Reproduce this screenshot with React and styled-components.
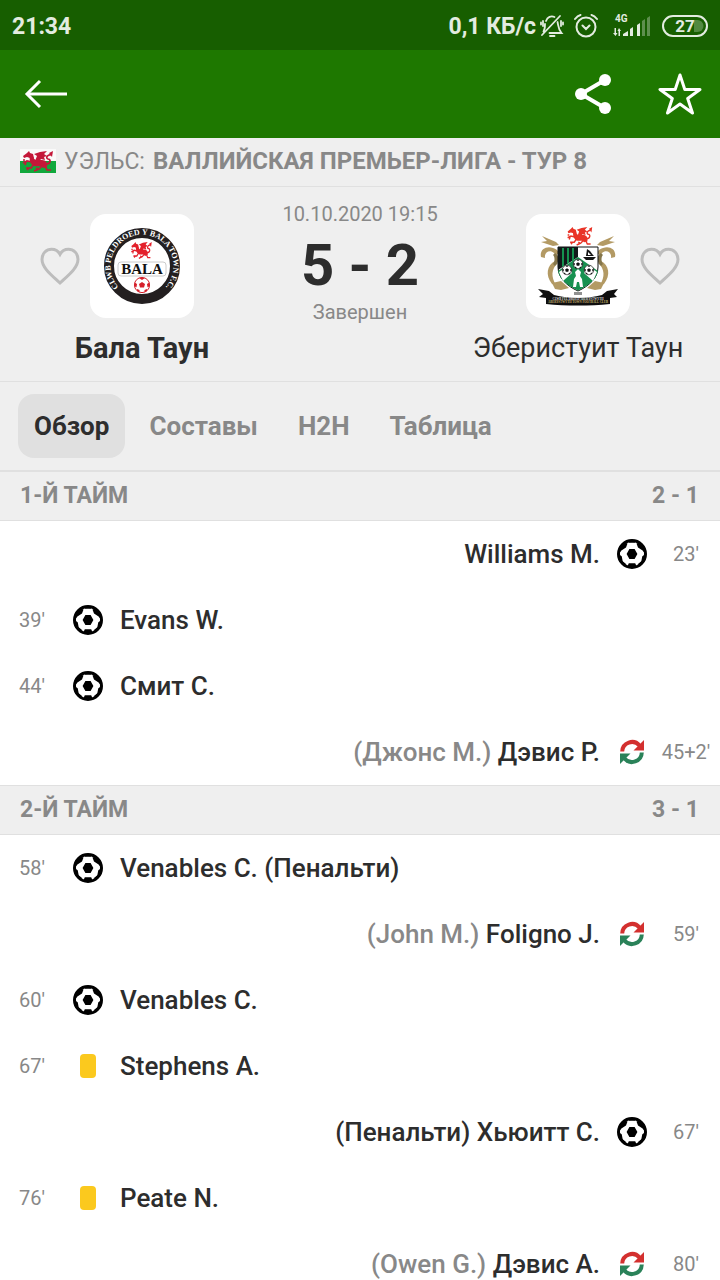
import React, { useState } from 'react';
import styled, { createGlobalStyle } from 'styled-components';

const color = {
  status: '#175e00',
  bar: '#1e7800',
  panel: '#efefef',
  line: '#e0e0e0',
  text: '#2d2d2d',
  muted: '#888888',
};

const GlobalStyle = createGlobalStyle`
  * { box-sizing: border-box; }
  body {
    margin: 0;
    background: #ffffff;
    color: ${color.text};
    font-family: Roboto, 'Noto Sans', sans-serif;
  }
  h1, h2, p, ul { margin: 0; padding: 0; }
  button { border: 0; padding: 0; background: none; font: inherit; color: inherit; cursor: pointer; }
`;

const Screen = styled.div`
  display: flex;
  flex-direction: column;
  height: 100vh;
  overflow: hidden;
`;

const StatusBar = styled.div`
  flex: none;
  display: flex;
  align-items: center;
  justify-content: space-between;
  height: 50px;
  padding: 2px 12px 0;
  background: ${color.status};
  color: #e3ece0;
  font-size: 23px;
  font-weight: 700;
`;

const StatusIcons = styled.div`
  display: flex;
  align-items: center;
`;

const StatusGlyph = styled.svg`
  display: block;
  margin-left: ${(p) => p.$gap}px;
`;

const SignalLabel = styled.text`
  font-size: 10px;
  font-weight: 700;
`;

const BatteryLabel = styled.text`
  font-size: 17px;
  font-weight: 700;
`;

const AppBar = styled.header`
  flex: none;
  display: flex;
  align-items: center;
  justify-content: space-between;
  height: 88px;
  padding: 0 16px 0 22px;
  background: ${color.bar};
  color: #ffffff;
`;

const AppBarActions = styled.div`
  display: flex;
  gap: 39px;
`;

const IconButton = styled.button`
  display: flex;
  align-items: center;
  justify-content: center;
  width: 48px;
  height: 48px;
`;

const League = styled.div`
  flex: none;
  display: flex;
  align-items: center;
  gap: 8px;
  height: 49px;
  padding: 0 20px 2px;
  background: ${color.panel};
  border-bottom: 1px solid ${color.line};
  color: ${color.muted};
  font-size: 23px;
  white-space: nowrap;
`;

const LeagueName = styled.strong`
  font-size: 24px;
  font-weight: 700;
`;

const Match = styled.section`
  flex: none;
  display: grid;
  grid-template-columns: 1fr 152px 1fr;
  height: 195px;
  background: ${color.panel};
  border-bottom: 1px solid ${color.line};
`;

const Team = styled.div`
  display: flex;
  flex-direction: column;
  align-items: center;
  gap: 12px;
  padding-top: 27px;
`;

const CrestRow = styled.div`
  display: grid;
  grid-template-columns: 40px 104px 40px;
  align-items: center;
  gap: 10px;
`;

const FavouriteButton = styled.button`
  display: flex;
  grid-row: 1;
  grid-column: ${(p) => (p.$side === 'left' ? 1 : 3)};
`;

const CrestCard = styled.div`
  grid-row: 1;
  grid-column: 2;
  height: 104px;
  border-radius: 16px;
  background: #ffffff;
`;

const CrestArt = styled.svg`
  display: block;
`;

const CrestText = styled.text`
  font-family: 'Liberation Serif', serif;
  font-size: ${(p) => p.$size}px;
  font-weight: 700;
`;

const TeamName = styled.h2`
  font-size: ${(p) => (p.$winner ? 29 : 27)}px;
  line-height: 36px;
  font-weight: ${(p) => (p.$winner ? 700 : 400)};
  white-space: nowrap;
`;

const Result = styled.div`
  display: flex;
  flex-direction: column;
  align-items: center;
  padding-top: 14px;
  white-space: nowrap;
`;

const ResultNote = styled.p`
  color: ${color.muted};
  font-size: 20px;
  line-height: 26px;
`;

const Score = styled.h1`
  padding-top: 4px;
  font-size: 58px;
  line-height: 68px;
  margin-bottom: 0;
  font-weight: 700;
`;

const Tabs = styled.nav`
  flex: none;
  display: flex;
  align-items: center;
  gap: 8px;
  height: 89px;
  padding: 0 18px;
  background: ${color.panel};
  border-bottom: 1px solid ${color.line};
`;

const Tab = styled.button`
  && {
    height: 64px;
    padding: 0 16px;
    border-radius: 16px;
    background: ${(p) => (p.$active ? '#e0e0e0' : 'transparent')};
    color: ${(p) => (p.$active ? color.text : color.muted)};
    font-size: 26px;
    font-weight: 700;
  }
`;

const Timeline = styled.main`
  flex: 1;
  min-height: 0;
  overflow-y: auto;
  scrollbar-width: none;
`;

const HalfHeader = styled.div`
  display: flex;
  align-items: center;
  justify-content: space-between;
  height: 50px;
  padding: 0 21px 2px 20px;
  background: ${color.panel};
  border-top: 1px solid ${color.line};
  border-bottom: 1px solid ${color.line};
  color: ${color.muted};
  font-size: 23px;
  font-weight: 700;
`;

const EventList = styled.ul`
  list-style: none;
`;

const EventRow = styled.li`
  display: flex;
  flex-direction: ${(p) => (p.$away ? 'row-reverse' : 'row')};
  align-items: center;
  height: 66px;
`;

const Minute = styled.span`
  display: flex;
  justify-content: center;
  width: ${(p) => (p.$away ? 68 : 64)}px;
  color: ${color.muted};
  font-size: 20px;
  white-space: nowrap;
`;

const EventIcon = styled.span`
  display: flex;
  justify-content: center;
  width: ${(p) => (p.$away ? 40 : 48)}px;
`;

const EventText = styled.span`
  padding: 0 ${(p) => (p.$away ? 12 : 8)}px;
  font-size: 26px;
  font-weight: 500;
  white-space: nowrap;
`;

const Replaced = styled.span`
  color: ${color.muted};
`;

const YellowCard = styled.span`
  width: 16px;
  height: 24px;
  border-radius: 4px;
  background: #fbc91e;
`;

function Dragon({ transform, tone }) {
  return (
    <g transform={transform} fill={tone}>
      <path d="M2 5 6 2 8 0 9 2 12 3 13 7 11 10 9 7 6 6 3 7Z" />
      <path d="M9 4C13 5 12 8 15 9L21 9C25 9 27 12 26 16L22 17C20 14 16 16 13 15 9 13 8 9 9 4Z" />
      <path d="M14 10 16 5 13 3 19 1 26 0 23 3 26 5 23 6 24 9 20 8 18 11Z" />
      <path d="M28 2 32 0 31 6Z" />
      <path
        d="M25 13C30 13 30 8 27 8 24 7 27 3 30 4M11 11 6 10 2 12M4 9 2 9M5 11 4 14M13 13 10 17 5 17M8 17 6 19M24 15 26 19 30 19M21 15 18 18 13 20M17 18 15 17"
        fill="none"
        stroke={tone}
        strokeWidth="1.7"
      />
    </g>
  );
}

function Ball() {
  return (
    <svg width="30" height="30" viewBox="0 0 30 30" aria-label="Гол">
      <circle cx="15" cy="15" r="13.5" fill="#fff" stroke="#000" strokeWidth="3" />
      <path
        d="M12.4 10H17.6L20.4 15 17.6 20H12.4L9.6 15ZM10.5 1.5H19.5L17.8 3.8H12.2ZM3 8 7.5 3.5 10.5 4.5 9 8.6 4.4 11.5 2.5 14H1.5ZM27 8 22.5 3.5 19.500 4.5 21 8.6 25.6 11.5 27.5 14H28.5ZM1.4 15 4.7 17.2 5.7 22.3 9 25 7 27 2.4 22ZM28.6 15 25.3 17.2 24.3 22.3 21 25 23 27 27.6 22ZM10 28.3 11.8 24.2H18.2L20 28.3Z"
        fill="#000"
      />
    </svg>
  );
}

function Substitution() {
  return (
    <svg width="26" height="26" viewBox="0 0 26 26" aria-label="Замена">
      <path d="M3.200 12.5A9.8 9.8 0 0 1 20.500 6.500" fill="none" stroke="#d3302f" strokeWidth="4" />
      <path d="M25 1V11.500H14.500Z" fill="#d3302f" />
      <path d="M22.800 13.5A9.8 9.8 0 0 1 5.500 19.500" fill="none" stroke="#2a8259" strokeWidth="4" />
      <path d="M1 25V14.500H11.500Z" fill="#2a8259" />
    </svg>
  );
}

function Heart() {
  return (
    <svg width="40" height="40" viewBox="0 0 40 40" fill="none" stroke="#bdbdbd" strokeWidth="3">
      <path d="M20 37C12 29.5 2 22 2 13.2C2 7.5 6.5 3.2 11.5 3.2C15 3.2 18.3 5 20 8.3C21.7 5 25 3.2 28.5 3.2C33.5 3.2 38 7.5 38 13.2C38 22 28 29.5 20 37Z" />
    </svg>
  );
}

function WalesFlag() {
  return (
    <svg width="36" height="24" viewBox="0 0 36 24" aria-label="Уэльс">
      <path d="M0 0H36V12H0Z" fill="#fafafa" />
      <path d="M0 12H36V24H0Z" fill="#11a83c" />
      <Dragon transform="translate(1 2)" tone="#c41739" />
    </svg>
  );
}

function MiniBall({ x, y, r, tone }) {
  return (
    <g transform={`translate(${x} ${y}) scale(${r / 8})`}>
      <circle r="7.6" fill="#fff" stroke={tone} strokeWidth="1" />
      <path
        d="M0-3L3-1 2 2.6H-2L-3-1ZM-3-7H3L0-5ZM7.2-2.5 5-1 5.5 2.2 7.3 1.5ZM-7.2-2.5-5-1-5.5 2.2-7.3 1.5ZM2.5 5 5 4 5 6 2.5 7.3ZM-2.5 5-5 4-5 6-2.5 7.3Z"
        fill={tone}
      />
    </g>
  );
}

function BalaCrest() {
  return (
    <CrestArt viewBox="0 0 104 104" role="img" aria-label="Бала Таун">
      <defs>
        <path id="balaRing" d="M31.8 76.1A31.4 31.4 0 1 1 72.2 76.1" />
      </defs>
      <circle cx="52" cy="52" r="33" fill="#fff" stroke="#231f20" strokeWidth="10" />
      <CrestText $size={8} fill="#fff">
        <textPath href="#balaRing" startOffset="50%" textAnchor="middle">CLWB PELDROED Y BALA TOWN F.C.</textPath>
      </CrestText>
      <Dragon transform="translate(40 28) scale(.68 .82)" tone="#e3202b" />
      <rect x="28" y="48" width="48" height="14" rx="3" fill="#fff" stroke="#ccc" />
      <CrestText $size={15} x="52" y="60" textAnchor="middle" fill="#111">BALA</CrestText>
      <MiniBall x={52} y={71} r={8} tone="#d5202b" />
    </CrestArt>
  );
}

function AberystwythCrest() {
  return (
    <CrestArt viewBox="0 0 104 104" role="img" aria-label="Эберистуит Таун">
      <g fill="#b39a64">
        <path d="M16 22 30 28 33 31 27 32 15 28 21 27Z" />
        <path d="M88 22 74 28 71 31 77 32 89 28 83 27Z" />
        <path d="M15 43C13 34 23 30 31 36 34 39 31 43 28 39 24 35 18 38 19 44Z" />
        <path d="M89 43C91 34 81 30 73 36 70 39 73 43 76 39 80 35 86 38 85 44Z" />
        <path d="M29 47C21 51 19 61 26 70L30 71C25 63 25 55 32 49Z" />
        <path d="M75 47C83 51 85 61 78 70L74 71C79 63 79 55 72 49Z" />
        <path d="M26 69 35 67 43 74 35 76 29 75Z" />
        <path d="M78 69 69 67 61 74 69 76 75 75Z" />
      </g>
      <path d="M29 39C34 42 33 49 29 52L27 50C29 47 29 43 27 41ZM75 39C70 42 71 49 75 52L77 50C75 47 75 43 77 41Z" fill="#85764b" />
      <Dragon transform="translate(40 13) scale(.82 .9)" tone="#e93427" />
      <path d="M32 33H72V53C72 64 63 72 52 77 41 72 32 64 32 53Z" fill="#fff" stroke="#111" />
      <path d="M32 33H52V43L32 56Z" fill="#12191a" />
      <path d="M36 34H38V52L36 53ZM41 34H43V49L41 50ZM46 34H48V46L46 47Z" fill="#15924e" />
      <path d="M52 43 72 57C70 66 62 72 52 76.5 42 72 34 66 32 57Z" fill="#189150" />
      <path d="M33 58 43 51 46 59 37 67ZM71 58 61 51 58 59 67 67Z" fill="#fff" />
      <path d="M47 73 48 65 50 62 49 58 52 55 55 58 54 62 56 65 57 73 54 73 53 68H51L50 73Z" fill="#fff" />
      <path d="M57 43H70L67 46H60ZM60 42 61 35 64 37 67 41 68 42Z" fill="#151515" />
      <path d="M62 38V41H65Z" fill="#fff" />
      <MiniBall x={52} y={50} r={5} tone="#111" />
      <MiniBall x={41} y={56} r={5} tone="#111" />
      <MiniBall x={63} y={56} r={5} tone="#111" />
      <path d="M49 78V81M51 78V81M53 78V81M55 78V81" stroke="#222" strokeWidth="1" />
      <path d="M12 75 23 77 28 81C43 85 61 85 76 81L81 77 92 75 88 80 91 83 84 84V90C64 92 40 92 20 90V84L13 83 17 80Z" fill="#0f0f0f" />
      <CrestText $size={3} x="52" y="86" textAnchor="middle" fill="#ddd">CLWB PEL DROED ABERYSTWYTH</CrestText>
      <CrestText $size={3} x="52" y="89" textAnchor="middle" fill="#c9b26f">ABERYSTWYTH TOWN FOOTBALL CLUB</CrestText>
    </CrestArt>
  );
}

function StatusBarContent() {
  return (
    <StatusBar>
      <span>21:34</span>
      <StatusIcons>
        <span>0,1 КБ/с</span>
        <StatusGlyph $gap={4} width="24" height="24" viewBox="0 0 24 24" fill="none" stroke="#e3ece0" strokeWidth="1.8" strokeLinecap="round">
          <path d="M6 7C7.500 3 11 1.500 14.500 3M17.500 8C18.500 12 18 15 21.500 19H9.500M5 10C5 14 4.500 16 3.500 17.500M2 21 20 2M10 22H14.500M3 7V12M1 8.500V10.500M21 7V12M23 8.500V10.500" />
        </StatusGlyph>
        <StatusGlyph $gap={10} width="24" height="24" viewBox="0 0 24 24" fill="none" stroke="#e3ece0" strokeWidth="2" strokeLinecap="round">
          <circle cx="12" cy="13" r="9.5" />
          <path d="M8.5 11.500 12 15 15.5 11.500M1 5C2.5 3 4 1.500 6.5 1M23 5C21.5 3 20 1.500 17.5 1" />
        </StatusGlyph>
        <StatusGlyph $gap={15} width="38" height="26" viewBox="0 0 38 26" fill="#e3ece0">
          <SignalLabel x="2" y="9">4G</SignalLabel>
          <path d="M1.500 15H3V20H4.500L2.500 23 0 20H1.500ZM5.500 23V18H4.500L6 15 8 18H7V23Z" />
          <path d="M10 23V21L15 18V23ZM17 23V16L20 14V23ZM24 23V12L27 10V23Z" />
          <path d="M29 23V8L32 6V23ZM34 23V5L37 3V23Z" opacity=".35" />
        </StatusGlyph>
        <StatusGlyph $gap={11} width="46" height="22" viewBox="0 0 46 22">
          <path d="M32 5H35.500A6 6 0 0 1 35.500 17H32Z" fill="#528941" />
          <rect x="1" y="1" width="44" height="20" rx="10" fill="none" stroke="#e3ece0" strokeWidth="2" />
          <BatteryLabel x="23" y="17" textAnchor="middle" fill="#e3ece0">27</BatteryLabel>
        </StatusGlyph>
      </StatusIcons>
    </StatusBar>
  );
}

const halves = [
  {
    title: '1-Й ТАЙМ',
    score: '2 - 1',
    events: [
      { minute: "23'", type: 'goal', player: 'Williams M.', away: true },
      { minute: "39'", type: 'goal', player: 'Evans W.' },
      { minute: "44'", type: 'goal', player: 'Смит С.' },
      { minute: "45+2'", type: 'sub', player: 'Дэвис Р.', off: '(Джонс М.)', away: true },
    ],
  },
  {
    title: '2-Й ТАЙМ',
    score: '3 - 1',
    events: [
      { minute: "58'", type: 'goal', player: 'Venables C. (Пенальти)' },
      { minute: "59'", type: 'sub', player: 'Foligno J.', off: '(John M.)', away: true },
      { minute: "60'", type: 'goal', player: 'Venables C.' },
      { minute: "67'", type: 'card', player: 'Stephens A.' },
      { minute: "67'", type: 'goal', player: '(Пенальти) Хьюитт С.', away: true },
      { minute: "76'", type: 'card', player: 'Peate N.' },
      { minute: "80'", type: 'sub', player: 'Дэвис А.', off: '(Owen G.)', away: true },
    ],
  },
];

const eventIcons = { goal: <Ball />, sub: <Substitution />, card: <YellowCard /> };
const tabs = ['Обзор', 'Составы', 'H2H', 'Таблица'];

export default function App() {
  const [active, setActive] = useState(tabs[0]);
  return (
    <Screen>
      <GlobalStyle />
      <StatusBarContent />
      <AppBar>
        <IconButton aria-label="Назад">
          <svg width="44" height="30" viewBox="0 0 44 30" fill="none" stroke="#fff" strokeWidth="3">
            <path d="M3 15H43" />
            <path d="M16 2 3 15 16 28" />
          </svg>
        </IconButton>
        <AppBarActions>
          <IconButton aria-label="Поделиться">
            <svg width="38" height="42" viewBox="0 0 38 42" fill="#fff">
              <path d="M31 7 7 21 31 35" fill="none" stroke="#fff" strokeWidth="4" />
              <circle cx="31" cy="7" r="6" />
              <circle cx="7" cy="21" r="6" />
              <circle cx="31" cy="35" r="6" />
            </svg>
          </IconButton>
          <IconButton aria-label="В избранное">
            <svg width="44" height="44" viewBox="0 0 44 44" fill="none" stroke="#fff" strokeWidth="3" strokeLinejoin="round">
              <path d="M22 3 26.8 17.5H42L29.7 26.5 34.5 41 22 32 9.5 41 14.3 26.5 2 17.5H17.2Z" />
            </svg>
          </IconButton>
        </AppBarActions>
      </AppBar>
      <League>
        <WalesFlag />
        <span>УЭЛЬС:</span>
        <LeagueName>ВАЛЛИЙСКАЯ ПРЕМЬЕР-ЛИГА - ТУР 8</LeagueName>
      </League>
      <Match>
        <Team>
          <CrestRow>
            <FavouriteButton $side="left" aria-label="Следить: Бала Таун"><Heart /></FavouriteButton>
            <CrestCard><BalaCrest /></CrestCard>
          </CrestRow>
          <TeamName $winner>Бала Таун</TeamName>
        </Team>
        <Result>
          <ResultNote>10.10.2020 19:15</ResultNote>
          <Score>5 - 2</Score>
          <ResultNote>Завершен</ResultNote>
        </Result>
        <Team>
          <CrestRow>
            <CrestCard><AberystwythCrest /></CrestCard>
            <FavouriteButton $side="right" aria-label="Следить: Эберистуит Таун"><Heart /></FavouriteButton>
          </CrestRow>
          <TeamName>Эберистуит Таун</TeamName>
        </Team>
      </Match>
      <Tabs>
        {tabs.map((name) => (
          <Tab key={name} $active={name === active} onClick={() => setActive(name)}>{name}</Tab>
        ))}
      </Tabs>
      <Timeline>
        {halves.map((half) => (
          <section key={half.title}>
            <HalfHeader>
              <span>{half.title}</span>
              <span>{half.score}</span>
            </HalfHeader>
            <EventList>
              {half.events.map((e) => (
                <EventRow key={e.minute + e.player} $away={e.away}>
                  <Minute $away={e.away}>{e.minute}</Minute>
                  <EventIcon $away={e.away}>{eventIcons[e.type]}</EventIcon>
                  <EventText $away={e.away}>
                    {e.off && <Replaced>{e.off} </Replaced>}
                    {e.player}
                  </EventText>
                </EventRow>
              ))}
            </EventList>
          </section>
        ))}
      </Timeline>
    </Screen>
  );
}
